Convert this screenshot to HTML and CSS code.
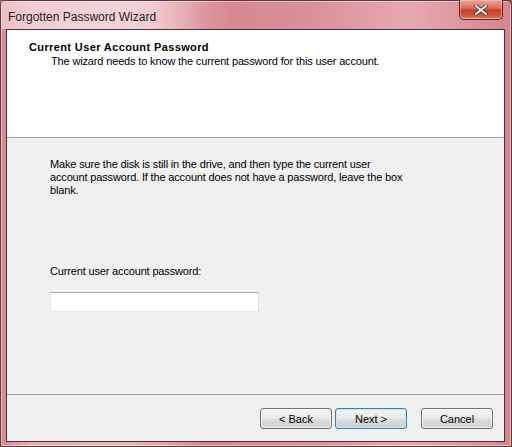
FILE: index.html
```html
<!DOCTYPE html>
<html>
<head>
<meta charset="utf-8">
<link rel="stylesheet" href="styles.css">
</head>
<body>
<div class="window">
  <div class="titlebar">
    <span class="title">Forgotten Password Wizard</span>
    <div class="close"><svg width="14" height="10" viewBox="0 0 14 10"><path d="M2 1 L12 9 M12 1 L2 9" stroke="#4a1a14" stroke-width="3.4" stroke-linecap="square"/><path d="M2 1 L12 9 M12 1 L2 9" stroke="#ffffff" stroke-width="2" stroke-linecap="square"/></svg></div>
  </div>
  <div class="client">
    <div class="header">
      <div class="h-title">Current User Account Password</div>
      <div class="h-sub">The wizard needs to know the current password for this user account.</div>
    </div>
    <div class="body">
      <p class="intro">Make sure the disk is still in the drive, and then type the current user<br>account password. If the account does not have a password, leave the box<br>blank.</p>
      <label class="label">Current user account password:</label>
      <div class="input"></div>
    </div>
    <div class="footer">
      <button class="btn">&lt; Back</button>
      <button class="btn btn-default">Next &gt;</button>
      <button class="btn btn-cancel">Cancel</button>
    </div>
  </div>
</div>
</body>
</html>
```
FILE: styles.css
```css
html, body { margin: 0; padding: 0; background: #7a5a60; }
body { width: 512px; height: 447px; overflow: hidden; font-family: "Liberation Sans", Arial, sans-serif; }
.window {
  width: 512px; height: 447px; box-sizing: border-box;
  border: 1px solid #5e3a40; border-radius: 6px 6px 2px 2px;
  padding: 0 6px 4px 5px;
  display: flex; flex-direction: column;
  background: linear-gradient(90deg, #d68892 0%, #e5aeb6 6%, #e9b9c0 25%, #d6858f 40%, #d98e99 60%, #e5a9b1 80%, #d5858f 100%);
  box-shadow: inset 0 0 0 1px rgba(255,255,255,0.45);
}
.titlebar {
  height: 28px; display: flex; align-items: flex-start; position: relative;
  background: linear-gradient(90deg, rgba(255,235,238,0.55) 0%, rgba(255,235,238,0.5) 30%, rgba(255,235,238,0) 45%, rgba(255,235,238,0) 100%);
  margin: 0 -6px 0 -5px; padding: 0 6px 0 5px;
}
.title { font-size: 12px; color: #1e1e1e; margin: 9px 0 0 2px; line-height: 14px; }
.close {
  position: absolute; right: 8px; top: -1px; width: 42px; height: 19px;
  border: 1px solid #5a2620; border-top: none; border-radius: 0 0 5px 5px;
  background: linear-gradient(180deg, #eca59b 0%, #d9745f 40%, #c43e28 55%, #cf5a3e 85%, #e49a7e 100%);
  box-shadow: inset 0 0 0 1px rgba(255,200,190,0.5);
  display: flex; align-items: center; justify-content: center;
}
.client {
  flex: 1; border: 1px solid #4a3035; background: #f0f0f0;
  display: flex; flex-direction: column; min-height: 0;
}
.header {
  height: 108px; box-sizing: border-box; background: #ffffff;
  border-bottom: 1px solid #a0a0a0; padding: 11px 0 0 22px;
}
.h-title { font-size: 11px; font-weight: bold; line-height: 13px; color: #000; letter-spacing: 0.38px; }
.h-sub { font-size: 11px; line-height: 13px; color: #000; margin: 1px 0 0 22px; letter-spacing: -0.15px; }
.body { flex: 1; padding: 20px 0 0 43px; font-size: 11px; color: #000; letter-spacing: -0.16px; }
.intro { margin: 0; white-space: nowrap; line-height: 13px; }
.label { display: block; margin-top: 68px; line-height: 13px; }
.input {
  margin-top: 14px; width: 207px; height: 18px;
  border: 1px solid #abadb3; border-left-color: #e2e3ea; border-right-color: #dbdfe6; border-bottom-color: #e3e9ef;
  background: #ffffff;
}
.footer {
  height: 47px; box-sizing: border-box; border-top: 1px solid #a0a0a0;
  display: flex; justify-content: flex-end; align-items: flex-start;
  padding: 13px 11px 0 0;
}
.btn {
  width: 72px; height: 21px; box-sizing: border-box; margin: 0 0 0 3px;
  font-family: "Liberation Sans", Arial, sans-serif; font-size: 11px; color: #000;
  border: 1px solid #707070; border-radius: 3px;
  background: linear-gradient(180deg, #f2f2f2 0%, #ebebeb 48%, #dddddd 52%, #cfcfcf 100%);
  box-shadow: inset 0 0 0 1px rgba(255,255,255,0.7);
  padding: 0;
}
.btn-default { border-color: #3c7fb1; box-shadow: inset 0 0 0 1px #bde7f8; }
.btn-cancel { margin-left: 14px; }
```
